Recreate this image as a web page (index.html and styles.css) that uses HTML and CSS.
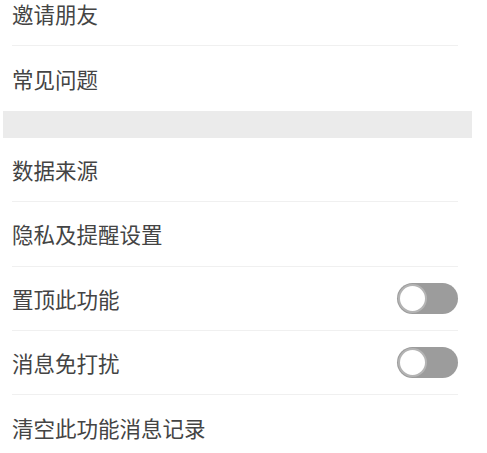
FILE: index.html
```html
<!DOCTYPE html>
<html lang="zh-CN">
<head>
    <meta charset="UTF-8">
    <title>设置</title>
    <link rel="stylesheet" href="styles.css">
</head>
<body>
    <div class="settings">
        <ul class="group first">
            <li class="row">邀请朋友</li>
            <li class="row">常见问题</li>
        </ul>

        <div class="gap"></div>

        <ul class="group">
            <li class="row">数据来源</li>
            <li class="row">隐私及提醒设置</li>
            <li class="row">置顶此功能 <span class="switch"></span></li>
            <li class="row">消息免打扰 <span class="switch"></span></li>
            <li class="row">清空此功能消息记录</li>
        </ul>
    </div>
</body>
</html>
```

FILE: styles.css
```css
body {
    margin: 0;
    background: #fff;
    font-family: "Noto Sans CJK SC", "Noto Sans", sans-serif;
    color: #444;
}

.settings {
    width: 487px;
    overflow: hidden;
}

.group {
    list-style: none;
    margin: 0;
    padding: 0;
}

/* list is scrolled a little, first row is cut off */
.group.first {
    margin-top: -18px;
}

.row {
    display: flex;
    align-items: center;
    justify-content: space-between;
    box-sizing: border-box;
    height: 64.4px;
    margin: 0 29px 0 12px;
    font-size: 21.5px;
    border-bottom: 1px solid #f0f0f0;
}

.row:last-child {
    border-bottom: none;
}

.gap {
    height: 27px;
    margin: 0 15px 0 3px;
    background-color: #ebebeb;
}

.switch {
    position: relative;
    width: 61px;
    height: 31px;
    border-radius: 16px;
    background-color: #9c9c9c;
}

.switch::after {
    content: "";
    position: absolute;
    left: 1px;
    top: 1px;
    width: 25px;
    height: 25px;
    border-radius: 50%;
    background: #fff;
    border: 2px solid #b4b4b4;
}
```
